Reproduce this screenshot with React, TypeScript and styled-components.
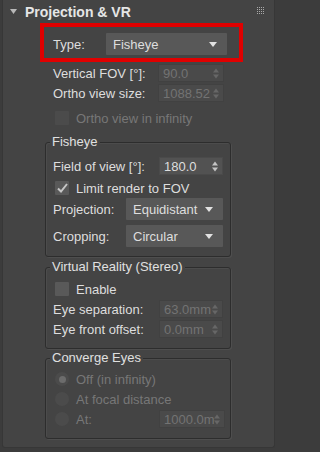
import React from 'react';
import styled, { createGlobalStyle } from 'styled-components';

const GlobalStyle = createGlobalStyle`
  html, body {
    margin: 0;
    padding: 0;
    background: #3c3c3c;
  }
  body {
    font-family: "Liberation Sans", Arial, sans-serif;
    font-size: 13px;
    color: #dcdcdc;
  }
`;

const Page = styled.div`
  width: 277px;
  height: 452px;
  overflow: hidden;
`;

const Rollout = styled.div`
  margin-left: 2px;
  width: 271px;
  height: 447px;
  background: #444444;
  border: 1px solid #373737;
  border-top: none;
  border-radius: 0 0 3px 3px;
  display: flex;
  flex-direction: column;
`;

const Header = styled.div`
  display: flex;
  align-items: center;
  height: 23px;
  padding: 0 10px 0 7px;
`;

const Title = styled.span`
  margin-left: 8px;
  font-weight: bold;
  font-size: 14px;
  color: #e6e6e6;
`;

const Grip = styled.svg`
  margin-left: auto;
  align-self: flex-start;
  margin-top: 7px;
`;

const Highlight = styled.div`
  margin-left: 37px;
  width: 203px;
  height: 39px;
  box-sizing: border-box;
  border: 4px solid #e00000;
  padding: 3px 0 0 9px;
  display: flex;
  align-items: center;
  align-self: flex-start;
`;

const Rows = styled.div<{ $top?: number }>`
  display: flex;
  flex-direction: column;
  padding-left: 50px;
  margin-top: ${p => p.$top ?? 0}px;
`;

const Row = styled.div<{ $h?: number; $top?: number }>`
  display: flex;
  align-items: center;
  height: ${p => p.$h ?? 20}px;
  margin-top: ${p => p.$top ?? 0}px;
`;

const Label = styled.span<{ $w?: number; $off?: boolean }>`
  width: ${p => (p.$w ? `${p.$w}px` : 'auto')};
  flex: none;
  white-space: nowrap;
  color: ${p => (p.$off ? '#777777' : '#dedede')};
`;

const Spinner = styled.div<{ $off?: boolean }>`
  width: 66px;
  height: 18px;
  box-sizing: border-box;
  display: flex;
  align-items: center;
  padding: 0 4px 0 4px;
  background: ${p => (p.$off ? '#4a4a4a' : '#525252')};
  border: 1px solid ${p => (p.$off ? '#414141' : '#4a4a4a')};
  color: ${p => (p.$off ? '#737373' : '#dedede')};
`;

const SpinValue = styled.span`
  flex: 1;
  overflow: hidden;
  white-space: nowrap;
`;

const Dropdown = styled.div<{ $w: number }>`
  width: ${p => p.$w}px;
  height: 22px;
  box-sizing: border-box;
  display: flex;
  align-items: center;
  padding: 0 10px 0 7px;
  background: #585858;
  color: #dedede;
  border-radius: 1px;
`;

const DropValue = styled.span`
  flex: 1;
`;

const Box = styled.span<{ $off?: boolean; $round?: boolean }>`
  width: 14px;
  height: 14px;
  flex: none;
  display: flex;
  align-items: center;
  justify-content: center;
  margin: 0 7px 0 2px;
  background: ${p => (p.$off ? '#4b4b4b' : '#595959')};
  border-radius: ${p => (p.$round ? '50%' : '1px')};
`;

const Dot = styled.span`
  width: 7px;
  height: 7px;
  border-radius: 50%;
  background: #6c6c6c;
`;

const Group = styled.div<{ $top: number }>`
  margin: ${p => p.$top}px 0 0 42px;
  width: 186px;
  box-sizing: border-box;
  border: 1px solid #2d2d2d;
  border-radius: 3px;
  box-shadow: 1px 1px 0 #4e4e4e, inset 1px 1px 0 #4c4c4c;
  padding: 0 7px 9px;
  display: flex;
  flex-direction: column;
`;

const GroupTitle = styled.div`
  margin: -9px 0 0 -3px;
  padding: 0 2px;
  width: fit-content;
  line-height: 16px;
  background: #444444;
  color: #e0e0e0;
`;

const SpinArrows = ({ off }: { off?: boolean }) => (
  <svg width="6" height="11" viewBox="0 0 6 11" style={{ flex: 'none' }}>
    <path d="M0 4.5 L3 0.5 L6 4.5 Z M0 6.5 L6 6.5 L3 10.5 Z" fill={off ? '#676767' : '#c4c4c4'} />
  </svg>
);

const DropArrow = () => (
  <svg width="8" height="5" viewBox="0 0 8 5">
    <path d="M0 0 L8 0 L4 5 Z" fill="#e2e2e2" />
  </svg>
);

const Check = () => (
  <svg width="11" height="10" viewBox="0 0 11 10">
    <path d="M1 5.5 L4 8.5 L10 1" stroke="#c6c6c6" strokeWidth="2" fill="none" />
  </svg>
);

function Spin({ value, off }: { value: string; off?: boolean }) {
  return (
    <Spinner $off={off}>
      <SpinValue>{value}</SpinValue>
      <SpinArrows off={off} />
    </Spinner>
  );
}

function Select({ value, width }: { value: string; width: number }) {
  return (
    <Dropdown $w={width}>
      <DropValue>{value}</DropValue>
      <DropArrow />
    </Dropdown>
  );
}

export default function App() {
  const grip = [];
  for (let r = 0; r < 4; r++) {
    for (let c = 0; c < 4; c++) {
      grip.push(<rect key={`${r}-${c}`} x={c * 2} y={r * 2} width="1" height="1" fill="#a8a8a8" />);
    }
  }

  return (
    <Page>
      <GlobalStyle />
      <Rollout>
        <Header>
          <svg width="7" height="5" viewBox="0 0 7 5">
            <path d="M0 0 L7 0 L3.5 5 Z" fill="#b8b8b8" />
          </svg>
          <Title>Projection &amp; VR</Title>
          <Grip width="7" height="7" viewBox="0 0 7 7">{grip}</Grip>
        </Header>

        <Highlight>
          <Label $w={53}>Type:</Label>
          <Select value="Fisheye" width={121} />
        </Highlight>

        <Rows $top={1}>
          <Row>
            <Label $w={105}>Vertical FOV [°]:</Label>
            <Spin value="90.0" off />
          </Row>
          <Row>
            <Label $w={105}>Ortho view size:</Label>
            <Spin value="1088.52" off />
          </Row>
          <Row $top={5}>
            <Box $off />
            <Label $off>Ortho view in infinity</Label>
          </Row>
        </Rows>

        <Group $top={14}>
          <GroupTitle>Fisheye</GroupTitle>
          <Row $top={6}>
            <Label $w={106}>Field of view [°]:</Label>
            <Spin value="180.0" />
          </Row>
          <Row $top={2}>
            <Box>
              <Check />
            </Box>
            <Label>Limit render to FOV</Label>
          </Row>
          <Row $h={22}>
            <Label $w={73}>Projection:</Label>
            <Select value="Equidistant" width={100} />
          </Row>
          <Row $h={22} $top={5}>
            <Label $w={73}>Cropping:</Label>
            <Select value="Circular" width={100} />
          </Row>
        </Group>

        <Group $top={10}>
          <GroupTitle>Virtual Reality (Stereo)</GroupTitle>
          <Row $top={4}>
            <Box />
            <Label>Enable</Label>
          </Row>
          <Row>
            <Label $w={106}>Eye separation:</Label>
            <Spin value="63.0mm" off />
          </Row>
          <Row>
            <Label $w={106}>Eye front offset:</Label>
            <Spin value="0.0mm" off />
          </Row>
        </Group>

        <Group $top={9}>
          <GroupTitle>Converge Eyes</GroupTitle>
          <Row $top={3}>
            <Box $off $round>
              <Dot />
            </Box>
            <Label $off>Off (in infinity)</Label>
          </Row>
          <Row>
            <Box $off $round />
            <Label $off>At focal distance</Label>
          </Row>
          <Row>
            <Box $off $round />
            <Label $off $w={83}>At:</Label>
            <Spin value="1000.0m" off />
          </Row>
        </Group>
      </Rollout>
    </Page>
  );
}
